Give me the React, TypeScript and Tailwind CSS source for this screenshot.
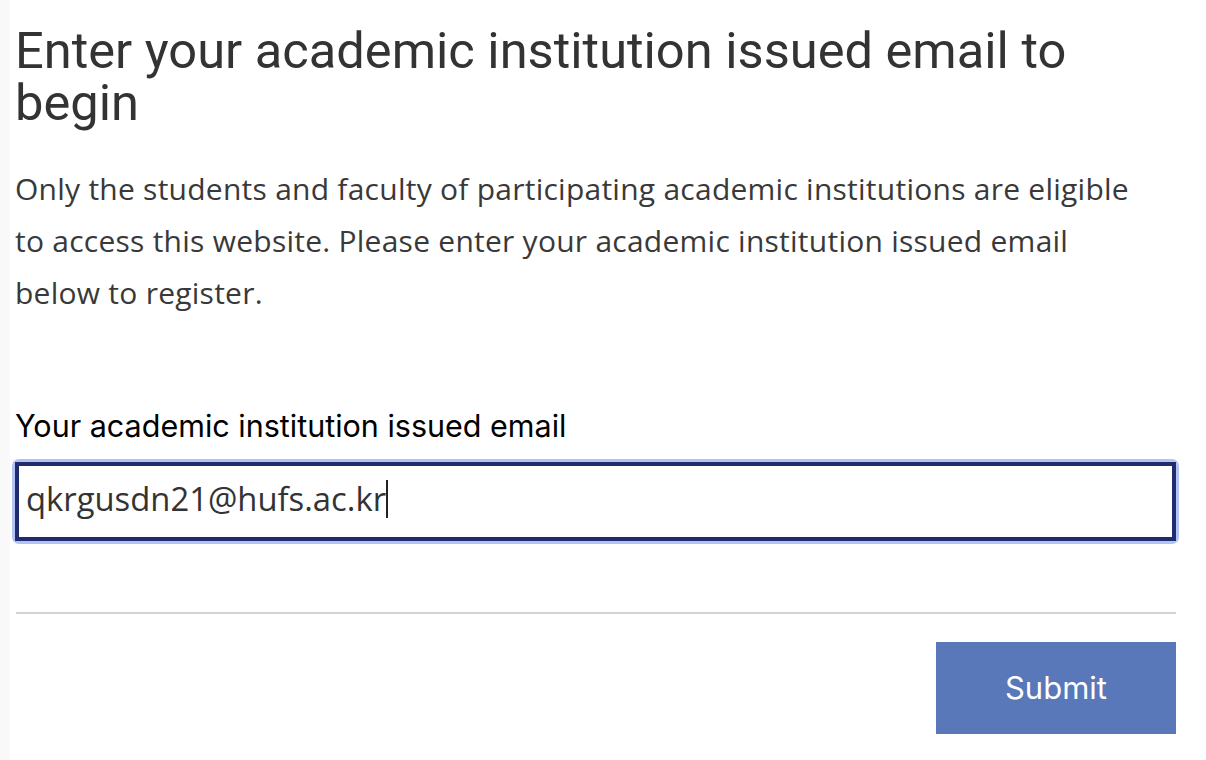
const EMAIL = "qkrgusdn21@hufs.ac.kr";

export default function App() {
  return (
    <div className="flex min-h-[760px] w-[1206px] bg-white">
      <div className="w-[10px] shrink-0 bg-[#f9f9f9]" />
      <div className="w-[1166px] pl-[5px] pt-[25px]">
        <h1 className="font-['Roboto',sans-serif] text-[50.6px] leading-[52px] font-normal text-[#333333]">
          Enter your academic institution issued email to begin
        </h1>
        <p className="mt-[34px] max-w-[1140px] font-['Open_Sans',sans-serif] text-[30px] leading-[52px] tracking-[0.25px] text-[#393939]">
          Only the students and faculty of participating academic institutions are eligible to access this
          website. Please enter your academic institution issued email below to register.
        </p>
        <label
          htmlFor="email"
          className="mt-[89px] block font-['Inter',sans-serif] text-[30.5px] leading-[36px] text-black"
        >
          Your academic institution issued email
        </label>
        <div className="relative mt-[18px] rounded-[4px] ring-[3px] ring-[#b3c3f3]">
          <input
            id="email"
            type="email"
            defaultValue={EMAIL}
            className="block h-[79px] w-full border-[4px] border-[#1f2d6e] bg-white px-[7px] pb-[6px] font-['Open_Sans',sans-serif] text-[32.8px] text-[#333333] outline-none"
          />
          {/* fake caret, screenshots hide the real one */}
          <div className="pointer-events-none absolute inset-0 flex items-center px-[11px] pb-[6px] font-['Open_Sans',sans-serif] text-[32.8px]">
            <span className="text-transparent">{EMAIL}</span>
            <span className="h-[38px] w-[2px] bg-[#222222]" />
          </div>
        </div>
        <div className="mt-[71px] ml-[1px] h-[2px] bg-[#d3d3d3]" />
        <div className="flex justify-end pt-[28px]">
          <button className="h-[92px] w-[240px] bg-[#5878b9] font-['Inter',sans-serif] text-[31px] text-white">
            Submit
          </button>
        </div>
      </div>
    </div>
  );
}
